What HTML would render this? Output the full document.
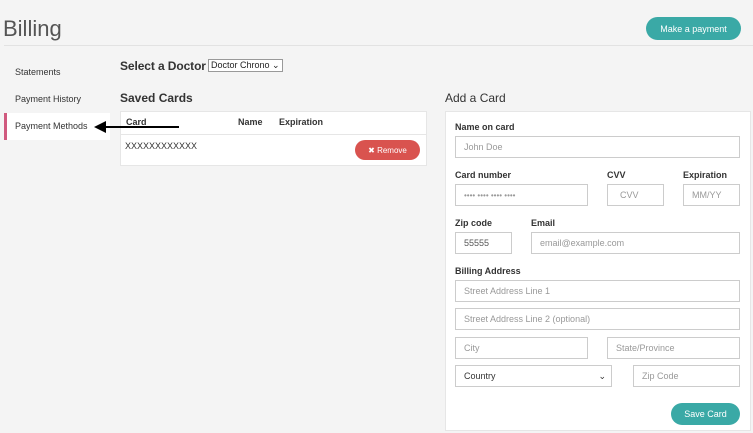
<!DOCTYPE html><html><head><style>
*{box-sizing:border-box;margin:0;padding:0}
body{width:753px;height:433px;background:#f4f4f4;font-family:"Liberation Sans",Arial,sans-serif;position:relative;overflow:hidden;color:#222}
.a{position:absolute}
.lbl{position:absolute;font-size:9px;font-weight:bold;color:#333}
.in{position:absolute;background:#fff;border:1px solid #ccc;font-size:9px;color:#999;padding-left:8px;display:flex;align-items:center}
.btn{position:absolute;background:#3aa9a6;color:#fff;border-radius:12px;font-size:9px;display:flex;align-items:center;justify-content:center}
.nav{position:absolute;left:15px;font-size:9px;color:#333}
</style></head><body>
<div class="a" style="left:3px;top:16px;font-size:22px;font-weight:300;color:#555">Billing</div>
<div class="btn" style="left:646px;top:17px;width:95px;height:23px">Make a payment</div>
<div class="a" style="left:4px;top:45px;width:749px;height:1px;background:#e2e2e2"></div>
<div class="nav" style="top:67px">Statements</div>
<div class="nav" style="top:94px">Payment History</div>
<div class="a" style="left:4px;top:113px;width:106px;height:27px;background:#fff;border-left:3px solid #d05a7e"></div>
<div class="nav" style="top:121px">Payment Methods</div>
<div class="a" style="left:120px;top:59px;font-size:12px;font-weight:bold;color:#333;letter-spacing:-0.1px">Select a Doctor</div>
<div class="a" style="left:208px;top:59px;width:75px;height:13px;border:1px solid #999;background:#fff;font-size:9px;padding-left:2px;line-height:11px;white-space:nowrap;overflow:hidden">Doctor Chrono ⌄</div>
<div class="a" style="left:120px;top:91px;font-size:12px;font-weight:bold;color:#333">Saved Cards</div>
<div class="a" style="left:120px;top:111px;width:307px;height:55px;background:#fff;border:1px solid #e6e6e6"></div>
<div class="lbl" style="left:126px;top:117px">Card</div>
<div class="lbl" style="left:238px;top:117px">Name</div>
<div class="lbl" style="left:279px;top:117px">Expiration</div>
<div class="a" style="left:121px;top:134px;width:305px;height:1px;background:#e6e6e6"></div>
<div class="a" style="left:125px;top:139px;width:200px;height:16px;background:#fff;font-size:9px;color:#333;line-height:14px">XXXXXXXXXXXX</div>
<div class="a" style="left:355px;top:140px;width:65px;height:20px;background:#d9534f;border-radius:10px;color:#fff;font-size:8px;display:flex;align-items:center;justify-content:center">✖ Remove</div>
<div class="a" style="left:445px;top:91px;font-size:12px;color:#333">Add a Card</div>
<div class="a" style="left:445px;top:111px;width:306px;height:320px;background:#fff;border:1px solid #e6e6e6"></div>
<div class="lbl" style="left:455px;top:122px">Name on card</div>
<div class="in" style="left:455px;top:136px;width:285px;height:22px">John Doe</div>
<div class="lbl" style="left:455px;top:170px">Card number</div>
<div class="lbl" style="left:607px;top:170px">CVV</div>
<div class="lbl" style="left:683px;top:170px">Expiration</div>
<div class="in" style="left:455px;top:184px;width:133px;height:22px;font-size:8px">•••• •••• •••• ••••</div>
<div class="in" style="left:607px;top:184px;width:57px;height:22px;padding-left:12px">CVV</div>
<div class="in" style="left:683px;top:184px;width:57px;height:22px">MM/YY</div>
<div class="lbl" style="left:455px;top:218px">Zip code</div>
<div class="lbl" style="left:531px;top:218px">Email</div>
<div class="in" style="left:455px;top:232px;width:57px;height:22px;color:#555">55555</div>
<div class="in" style="left:531px;top:232px;width:209px;height:22px">email@example.com</div>
<div class="lbl" style="left:455px;top:266px">Billing Address</div>
<div class="in" style="left:455px;top:280px;width:285px;height:22px">Street Address Line 1</div>
<div class="in" style="left:455px;top:308px;width:285px;height:22px">Street Address Line 2 (optional)</div>
<div class="in" style="left:455px;top:337px;width:133px;height:22px">City</div>
<div class="in" style="left:607px;top:337px;width:133px;height:22px">State/Province</div>
<div class="in" style="left:455px;top:365px;width:157px;height:22px;color:#333;justify-content:space-between;padding-right:5px">Country<span>⌄</span></div>
<div class="in" style="left:633px;top:365px;width:107px;height:22px">Zip Code</div>
<div class="btn" style="left:671px;top:403px;width:69px;height:22px">Save Card</div>
<svg class="a" style="left:92px;top:120px" width="90" height="14"><line x1="10" y1="7" x2="87" y2="7" stroke="#000" stroke-width="2"/><polygon points="2,7 14,1 14,13" fill="#000"/></svg>
</body></html>
